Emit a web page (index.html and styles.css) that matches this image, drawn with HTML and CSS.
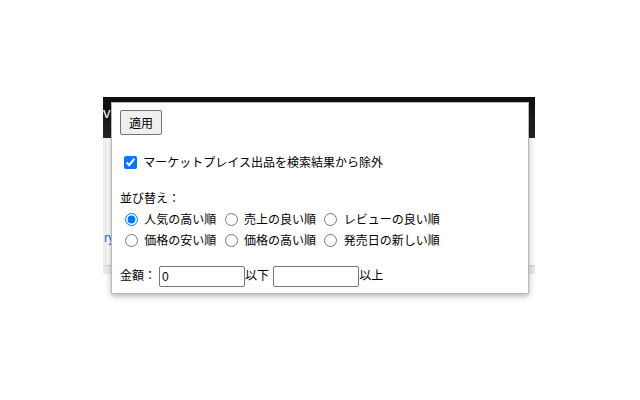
FILE: index.html
```html
<!DOCTYPE html>
<html lang="ja">
<head>
    <meta charset="UTF-8">
    <meta name="viewport" content="width=device-width, initial-scale=1.0">
    <title>検索フィルター</title>
    <link rel="stylesheet" href="styles.css">
</head>
<body>
    <div class="page">
        <div class="page-header">
            <span class="logo">v</span>
        </div>
        <div class="page-body">
            <a href="#" class="page-link">ry</a>
        </div>
        <div class="page-foot"></div>

        <div class="popup" id="filter-popup">
            <div class="row-apply">
                <button onclick="applyFilter()">適用</button>
            </div>

            <div class="row-check">
                <label><input type="checkbox" id="exclude-mp" checked> マーケットプレイス出品を検索結果から除外</label>
            </div>

            <div class="row-sort">
                <div class="sort-title">並び替え：</div>
                <div class="sort-line">
                    <label><input type="radio" name="sort" value="popular" checked> 人気の高い順</label>
                    <label><input type="radio" name="sort" value="sales"> 売上の良い順</label>
                    <label><input type="radio" name="sort" value="review"> レビューの良い順</label>
                </div>
                <div class="sort-line">
                    <label><input type="radio" name="sort" value="cheap"> 価格の安い順</label>
                    <label><input type="radio" name="sort" value="expensive"> 価格の高い順</label>
                    <label><input type="radio" name="sort" value="newest"> 発売日の新しい順</label>
                </div>
            </div>

            <div class="row-price">
                金額：<input type="text" id="price-max" value="0">以下 <input type="text" id="price-min">以上
            </div>
        </div>
    </div>

    <script>
        function applyFilter() {
            let exclude = document.getElementById("exclude-mp").checked;
            let sort = document.querySelector("input[name=sort]:checked").value;
            console.log(exclude, sort);
        }
    </script>
</body>
</html>
```

FILE: styles.css
```css
html, body {
    min-height: 400px;
}
body {
    margin: 0;
    background: #fff;
    font-family: "Liberation Sans", "Noto Sans CJK JP", sans-serif;
    font-size: 12px;
    color: #000;
}
.page {
    position: relative;
    margin: 97px 0 0 103px;
    width: 432px;
    padding-bottom: 30px;
}
.page-header {
    height: 41px;
    background: linear-gradient(#101010, #242424);
    color: #fff;
    font-size: 15px;
    line-height: 22px;
}
.logo {
    display: inline-block;
    margin-top: 5px;
}
.page-body {
    height: 127px;
    border-left: 4px solid #eee;
    padding-top: 92px;
    box-sizing: border-box;
}
.page-link {
    color: #2a6ad8;
    text-decoration: none;
    font-size: 13px;
    margin-left: -3px;
}
.page-foot {
    height: 8px;
    background: #eaeaea;
    border-top: 1px solid #d6d6d6;
}
.popup {
    position: absolute;
    left: 8px;
    top: 5px;
    width: 400px;
    padding: 7px 8px 6px 8px;
    background: #fff;
    border: 1px solid #b8b8b8;
    box-shadow: 0 2px 6px rgba(0, 0, 0, 0.3);
}
.row-apply {
    height: 25px;
}
button {
    font-family: inherit;
    font-size: 12px;
    height: 25px;
    padding: 0 8px;
    background: #efefef;
    border: 1px solid #767676;
    border-radius: 2px;
    color: #000;
}
.row-check {
    margin-top: 18px;
    line-height: 21px;
}
.row-check input {
    margin: 0 3px 0 4px;
    vertical-align: middle;
    position: relative;
    top: -1px;
}
.row-sort {
    margin-top: 15px;
    line-height: 21px;
}
.sort-title {
    height: 21px;
}
.sort-line {
    height: 21px;
    line-height: 20px;
}
.sort-line input {
    margin: 0 3px 0 5px;
    vertical-align: middle;
    position: relative;
    top: -1px;
}
.row-price {
    margin-top: 14px;
    line-height: 21px;
    height: 21px;
}
.row-price input {
    width: 86px;
    height: 21px;
    box-sizing: border-box;
    padding: 0 2px;
    margin-left: 1px;
    font-family: inherit;
    font-size: 12px;
    border: 1px solid #767676;
    border-radius: 2px;
    vertical-align: top;
}
.row-price #price-max {
    margin-left: 3px;
}
```
